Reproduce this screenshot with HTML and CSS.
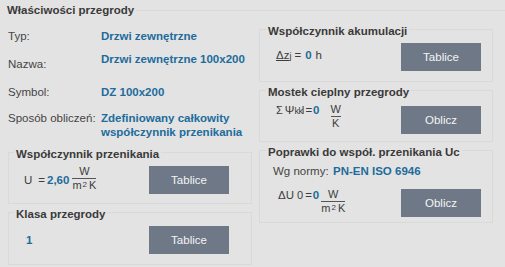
FILE: index.html
```html
<!DOCTYPE html>
<html lang="pl">
<head>
<meta charset="utf-8">
<title>Właściwości przegrody</title>
<link rel="stylesheet" href="styles.css">
</head>
<body>
<div class="page">
  <div class="head">
    <span class="head-title">Właściwości przegrody</span>
    <span class="head-rule"></span>
  </div>
  <div class="cols">
    <div class="col-left">
      <div class="props">
        <div class="prop prop-typ"><span class="lbl">Typ:</span><span class="val">Drzwi zewnętrzne</span></div>
        <div class="prop prop-nazwa"><span class="lbl lbl-low">Nazwa:</span><span class="val">Drzwi zewnętrzne 100x200</span></div>
        <div class="prop prop-symbol"><span class="lbl">Symbol:</span><span class="val">DZ 100x200</span></div>
        <div class="prop prop-sposob"><span class="lbl">Sposób obliczeń:</span><span class="val">Zdefiniowany całkowity<br>współczynnik przenikania</span></div>
      </div>
      <fieldset class="box box-u">
        <legend>Współczynnik przenikania</legend>
        <div class="row row-left">
          <div class="formula"><span class="sym-u">U</span><span class="eq">=</span><b class="num">2,60</b><span class="frac"><span class="fnum">W</span><span class="fden">m<span class="two">2</span>K</span></span></div>
          <button class="btn">Tablice</button>
        </div>
      </fieldset>
      <fieldset class="box box-klasa">
        <legend>Klasa przegrody</legend>
        <div class="row row-left">
          <div class="formula"><b class="num num-klasa">1</b></div>
          <button class="btn">Tablice</button>
        </div>
      </fieldset>
    </div>
    <div class="col-right">
      <fieldset class="box box-akum">
        <legend>Współczynnik akumulacji</legend>
        <div class="row row-right">
          <div class="formula formula-akum"><span class="under">Δz</span><sub>j</sub><span class="eq eq-akum">=</span><b class="num">0</b><span class="unit">h</span></div>
          <button class="btn">Tablice</button>
        </div>
      </fieldset>
      <fieldset class="box box-mostek">
        <legend>Mostek cieplny przegrody</legend>
        <div class="row row-right">
          <div class="formula formula-mostek"><span class="sigma">Σ</span><span class="psi">Ψ</span><sub class="kk">kk</sub><span class="ell">l</span><span class="eq eq-tight">=</span><b class="num">0</b><span class="frac frac-wk"><span class="fnum">W</span><span class="fden">K</span></span></div>
          <button class="btn">Oblicz</button>
        </div>
      </fieldset>
      <fieldset class="box box-popr">
        <legend>Poprawki do współ. przenikania Uc</legend>
        <div class="norm"><span class="norm-lbl">Wg normy:</span><b class="norm-val">PN-EN ISO 6946</b></div>
        <div class="row row-right row-popr">
          <div class="formula formula-popr"><span>ΔU</span><sub class="sub0">0</sub><span class="eq eq-tight">=</span><b class="num">0</b><span class="frac frac-popr"><span class="fnum">W</span><span class="fden">m<span class="two">2</span>K</span></span></div>
          <button class="btn">Oblicz</button>
        </div>
      </fieldset>
    </div>
  </div>
</div>
</body>
</html>
```

FILE: styles.css
```css
* { box-sizing: border-box; }

html, body {
  margin: 0;
  padding: 0;
  background: #e3e3e3;
}

body {
  font-family: "Liberation Sans", Arial, sans-serif;
  font-size: 11.5px;
  color: #3d3d3d;
  width: 505px;
  height: 267px;
  overflow: hidden;
}

.page {
  width: 505px;
}

.head {
  display: flex;
  align-items: center;
  height: 20px;
  padding-left: 7px;
}

.head-title {
  font-weight: bold;
  font-size: 11.5px;
  color: #3a3a3a;
  line-height: 20px;
}

.head-rule {
  flex: 1;
  height: 1px;
  margin-left: 2px;
  background: #dadada;
}

.cols {
  display: flex;
}

.col-left {
  width: 252px;
  padding-left: 8px;
}

.col-right {
  width: 234px;
  margin-left: 7px;
  padding-top: 1px;
}

/* properties list */
.props {
  margin-top: 9px;
}

.prop {
  display: grid;
  grid-template-columns: 93px 1fr;
  line-height: 14px;
}

.prop-typ { height: 23px; }
.prop-nazwa { height: 33px; }
.prop-symbol { height: 27px; }
.prop-sposob { height: 30px; line-height: 13.5px; }

.lbl {
  color: #454545;
  font-size: 11.5px;
}

.lbl-low {
  padding-top: 5px;
}

.val {
  font-weight: bold;
  color: #1d6c9c;
  font-size: 11.5px;
}

/* boxes */
.box {
  margin: 0;
  padding: 6px 0 10px 0;
  border: 1px solid #d9d9d9;
  min-inline-size: 0;
}

.box legend {
  margin-left: 5px;
  padding: 4px 2px 0 2px;
  line-height: 12px;
  font-weight: bold;
  font-size: 11.5px;
  color: #3a3a3a;
}

.col-right .box legend {
  margin-left: 6px;
}

.box-u {
  width: 244px;
  margin-top: 2px;
  padding-bottom: 9px;
}

.box-klasa {
  width: 244px;
}

.box-akum {
  width: 234px;
}

.box-mostek {
  width: 234px;
  padding-bottom: 9px;
}

.box-popr {
  width: 234px;
  padding-bottom: 5px;
}

.row {
  display: grid;
  grid-template-columns: 125px 80px;
  align-items: center;
  height: 28px;
}

.row-left { padding-left: 15px; }
.row-right { padding-left: 16px; }

.row-popr {
  margin-top: 11px;
  padding-left: 18px;
  grid-template-columns: 123px 80px;
}

.btn {
  width: 80px;
  height: 28px;
  border: none;
  margin: 0;
  padding: 0;
  background: #6e7887;
  color: #f4f4f4;
  font-family: "Liberation Sans", Arial, sans-serif;
  font-size: 11.5px;
}

.formula {
  display: flex;
  align-items: center;
  white-space: nowrap;
  color: #3d3d3d;
  font-size: 11.5px;
}

.num {
  color: #1d6c9c;
  font-weight: bold;
}

.num-klasa {
  padding-left: 2px;
}

.sym-u {
  margin-right: 6px;
}

.eq {
  margin-right: 2px;
}

.frac {
  display: inline-flex;
  flex-direction: column;
  align-items: center;
  margin-left: 3px;
  font-size: 11px;
  line-height: 11px;
  margin-bottom: 2px;
}

.fnum {
  display: block;
  width: 100%;
  text-align: center;
  border-bottom: 1px solid #555;
  padding-bottom: 1px;
}

.fden {
  display: block;
  padding-top: 1px;
}

.two {
  font-size: 8px;
  position: relative;
  top: -2px;
  margin: 0 2px 0 1px;
}

/* akumulacja */
.formula-akum {
  align-items: baseline;
  margin-bottom: 4px;
}

.under {
  text-decoration: underline;
}

.formula-akum sub {
  font-size: 9px;
  vertical-align: -3px;
  margin-right: 3px;
}

.eq-akum {
  margin-right: 4px;
}

.unit {
  margin-left: 4px;
}

/* mostek */
.formula-mostek {
  align-items: baseline;
  margin-bottom: 4px;
}

.sigma { margin-right: 2px; font-size: 11px; }
.psi { font-size: 11.5px; }

.kk {
  font-size: 9px;
  vertical-align: -4px;
  letter-spacing: -0.3px;
}

.ell {
  margin-left: -1px;
}

.eq-tight {
  margin: 0 1px;
}

.frac-wk {
  margin-left: 9px;
  align-self: center;
  padding: 0 2px;
}

/* poprawki */
.norm {
  display: flex;
  line-height: 14px;
  padding-left: 13px;
}

.norm-lbl {
  color: #454545;
  width: 60px;
}

.norm-val {
  color: #1d6c9c;
}

.formula-popr {
  align-items: baseline;
}

.sub0 {
  font-size: 11px;
  vertical-align: -5px;
  margin-left: 3px;
  margin-right: 1px;
}

.frac-popr {
  align-self: center;
  margin-left: 2px;
}
```
